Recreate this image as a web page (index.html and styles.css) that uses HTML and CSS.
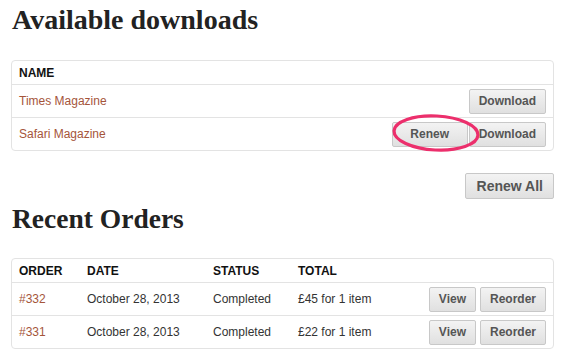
FILE: index.html
```html
<!DOCTYPE html>
<html lang="en">
<head>
    <meta charset="UTF-8">
    <title>My Account - Downloads</title>
    <link rel="stylesheet" href="styles.css">
</head>
<body>
    <div class="account">
        <h2>Available downloads</h2>

        <table class="shop-table">
            <thead>
                <tr>
                    <th>Name</th>
                    <th></th>
                </tr>
            </thead>
            <tbody>
                <tr>
                    <td><a href="#">Times Magazine</a></td>
                    <td class="actions"><button>Download</button></td>
                </tr>
                <tr>
                    <td><a href="#">Safari Magazine</a></td>
                    <td class="actions">
                        <span class="highlight">
                            <button>Renew</button>
                            <svg class="circle" width="96" height="44" viewBox="0 0 96 44">
                                <ellipse cx="48" cy="22" rx="42" ry="17" fill="none" stroke="#ec2f6c" stroke-width="3.2" transform="rotate(3 48 22)"/>
                            </svg>
                        </span><button>Download</button>
                    </td>
                </tr>
            </tbody>
        </table>

        <div class="renew-all">
            <button class="big">Renew All</button>
        </div>

        <h2 class="orders-title">Recent Orders</h2>

        <table class="shop-table orders">
            <thead>
                <tr>
                    <th class="col-order">Order</th>
                    <th class="col-date">Date</th>
                    <th class="col-status">Status</th>
                    <th>Total</th>
                    <th></th>
                </tr>
            </thead>
            <tbody>
                <tr>
                    <td><a href="#">#332</a></td>
                    <td>October 28, 2013</td>
                    <td>Completed</td>
                    <td>&pound;45 for 1 item</td>
                    <td class="actions"><button>View</button><button>Reorder</button></td>
                </tr>
                <tr>
                    <td><a href="#">#331</a></td>
                    <td>October 28, 2013</td>
                    <td>Completed</td>
                    <td>&pound;22 for 1 item</td>
                    <td class="actions"><button>View</button><button>Reorder</button></td>
                </tr>
            </tbody>
        </table>
    </div>
</body>
</html>
```

FILE: styles.css
```css
body {
    margin: 0;
    background-color: white;
    font-family: 'Liberation Sans', Arial, sans-serif;
    font-size: 12px;
    color: #333;
}
.account {
    padding: 0 11px 0 11px;
}
h2 {
    font-family: 'Liberation Serif', 'Times New Roman', serif;
    font-size: 28px;
    font-weight: bold;
    color: #222;
    margin: 2px 0 0 1px;
    height: 58px;
    line-height: 36px;
}
.orders-title {
    font-size: 27.5px;
    margin-top: -2px;
    height: 57px;
}
.shop-table {
    width: 100%;
    border-collapse: separate;
    border-spacing: 0;
    border: 1px solid #e3e3e3;
    border-radius: 4px;
}
.shop-table th {
    text-align: left;
    text-transform: uppercase;
    font-weight: bold;
    color: #111;
    padding: 0 7px;
    height: 23px;
    border-bottom: 1px solid #e3e3e3;
}
.shop-table td {
    padding: 0 7px;
    height: 32px;
    border-bottom: 1px solid #e3e3e3;
}
.shop-table tbody tr:last-child td {
    border-bottom: none;
}
.shop-table a {
    color: #a5553a;
    text-decoration: none;
}
.actions {
    text-align: right;
    white-space: nowrap;
}
button {
    font-family: 'Liberation Sans', Arial, sans-serif;
    font-size: 12px;
    font-weight: bold;
    color: #555;
    height: 25px;
    padding: 0 9px;
    margin-left: 4px;
    border: 1px solid #c8c8c8;
    border-radius: 2px;
    background: linear-gradient(#f3f3f3, #e0e0e0);
    vertical-align: middle;
}
button.big {
    font-size: 14px;
    height: 26px;
    padding: 0 10px 0 11px;
}
.highlight {
    position: relative;
    display: inline-block;
    margin-right: -3px;
}
.highlight button {
    width: 76px;
}
.circle {
    position: absolute;
    left: 0;
    top: -11px;
    pointer-events: none;
}
.renew-all {
    text-align: right;
    margin: 22px 0 4px 0;
}
.orders .col-order {
    width: 54px;
}
.orders .col-date {
    width: 112px;
}
.orders .col-status {
    width: 71px;
}
```
